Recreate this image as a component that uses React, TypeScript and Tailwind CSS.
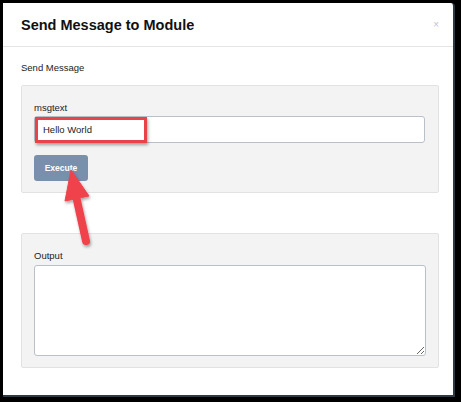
export default function App() {
  return (
    <div className="w-[461px] h-[402px] bg-black pt-[3px] pl-[3px] font-['Liberation_Sans',Arial,sans-serif]">
      <div className="relative w-[452px] h-[394px] bg-white rounded-tr-[4px] border-b-2 border-r-2 border-[#2d3a44] flex flex-col">
        {/* HEADER */}
        <header className="flex items-center justify-between pl-[18px] pr-[14px] pt-[12px] pb-[11px] border-b border-[#e5e5e5]">
          <h1 className="text-[14.5px] leading-[20px] font-bold text-[#111]">Send Message to Module</h1>
          <span className="text-[10px] leading-none text-[#c4c4c4]">×</span>
        </header>

        {/* BODY */}
        <main className="pl-[18px] pr-[14px] pt-[14px] text-[#222]">
          <p className="text-[9.5px] leading-[14px] mb-[10px]">Send Message</p>

          <section className="bg-[#f3f3f3] border border-[#e2e2e2] rounded-[2px] pl-[12px] pr-[13px] pt-[15px] pb-[11px]">
            <label className="block text-[9.5px] leading-[14px] mb-[1px]">msgtext</label>
            <div className="relative">
              <input
                readOnly
                value="Hello World"
                className="w-full h-[27px] bg-white border border-[#b9c0c7] rounded-[3px] pl-[8px] text-[9.5px] text-[#222] outline-none"
              />
              <div className="absolute left-[1px] top-[1px] w-[112px] h-[26px] border-[3px] border-[#e8424a] shadow-[1px_2px_3px_rgba(0,0,0,0.35)]" />
            </div>
            <button className="mt-[12px] w-[54px] h-[26px] rounded-[3px] bg-[#7990ac] text-white text-[8.5px] font-bold">
              Execute
            </button>
          </section>

          <section className="mt-[40px] bg-[#f3f3f3] border border-[#e2e2e2] rounded-[2px] pl-[12px] pr-[12px] pt-[15px] pb-[11px]">
            <label className="block text-[9.5px] leading-[14px] mb-[2px]">Output</label>
            <textarea
              readOnly
              className="block w-full h-[91px] bg-white border border-[#b9c0c7] rounded-[3px] outline-none"
            />
          </section>
        </main>

        {/* ARROW */}
        <svg className="absolute left-0 top-0 pointer-events-none" width="452" height="394" viewBox="3 3 452 394">
          <defs>
            <filter id="sh" x="-50%" y="-50%" width="200%" height="200%">
              <feDropShadow dx="1" dy="2" stdDeviation="1.5" floodColor="#000" floodOpacity="0.35" />
            </filter>
          </defs>
          <g filter="url(#sh)" fill="#f0434b" stroke="#f0434b">
            <line x1="76" y1="196" x2="86" y2="241" strokeWidth="8" strokeLinecap="round" />
            <polygon points="71,170 65,201 89,196" strokeWidth="1" strokeLinejoin="round" />
          </g>
        </svg>
      </div>
    </div>
  );
}
